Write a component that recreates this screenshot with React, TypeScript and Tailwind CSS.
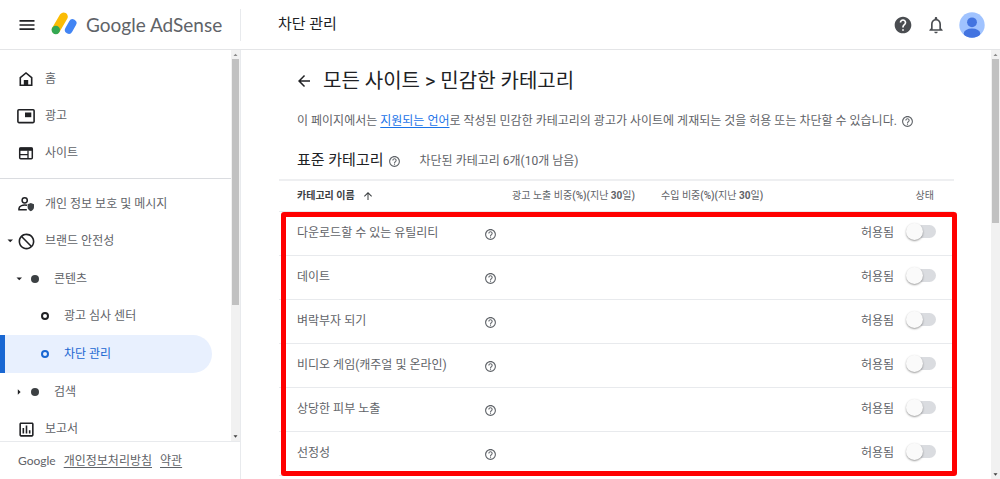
import { useState, type ReactNode } from "react";
import {
  MdArrowBack,
  MdArrowUpward,
  MdBlock,
  MdHelp,
  MdHelpOutline,
  MdMenu,
  MdNotificationsNone,
  MdOutlineAssessment,
} from "react-icons/md";

const LATIN_LOGO = "font-[Lato,sans-serif]";

function AdSenseLogo() {
  return (
    <svg viewBox="0 0 26 24" className="h-6 w-[26px] shrink-0" aria-hidden="true">
      <line x1="12.600" y1="4.700" x2="5" y2="17.700" stroke="#fbbc04" strokeWidth="8.4" strokeLinecap="round" />
      <line x1="21.600" y1="11.200" x2="17.800" y2="17.900" stroke="#4285f4" strokeWidth="7.8" strokeLinecap="round" />
      <circle cx="4.8" cy="18" r="4.2" fill="#34a853" />
    </svg>
  );
}

function HomeIcon() {
  return (
    <svg viewBox="0 0 20 20" className="size-5" aria-hidden="true">
      <path d="M4.3 16.2V8.6L10 4l5.7 4.600v7.600Z" fill="none" stroke="currentColor" strokeWidth="1.6" />
      <path d="M7.800 11h4.400v5.500H7.800z" fill="currentColor" />
    </svg>
  );
}

function AdsIcon() {
  return (
    <svg viewBox="0 0 20 20" className="size-5" aria-hidden="true">
      <rect x="1.900" y="3.800" width="16.200" height="12.800" rx="1" fill="none" stroke="currentColor" strokeWidth="1.600" />
      <path d="M9 6.500h6.300v4.700H9z" fill="currentColor" />
    </svg>
  );
}

function SitesIcon() {
  return (
    <svg viewBox="0 0 20 20" className="size-5" aria-hidden="true">
      <rect x="3.700" y="5" width="12.600" height="10.800" rx="1" fill="none" stroke="currentColor" strokeWidth="1.500" />
      <path d="M3.500 4.500h13v3.300h-13z" fill="currentColor" />
      <path d="M4 11.700h7.700M12 7.500v8.300" fill="none" stroke="currentColor" strokeWidth="1.300" />
    </svg>
  );
}

function PrivacyIcon() {
  return (
    <svg viewBox="0 0 20 20" className="size-5" aria-hidden="true">
      <circle cx="8.700" cy="6.300" r="2.600" fill="none" stroke="currentColor" strokeWidth="1.500" />
      <path
        d="M11 11.300c-4-.9-8 .7-8 3.200v1.300h7.800"
        fill="none"
        stroke="currentColor"
        strokeWidth="1.600"
      />
      <path d="M14.800 9 18 10.300v2.700c0 2-1.300 3.600-3.200 4.200-1.900-.6-3.200-2.200-3.200-4.200v-2.700Z" fill="#3c4043" />
    </svg>
  );
}

function Dot() {
  return <span className="size-2 rounded-full bg-[#3c4043]" />;
}

function Ring() {
  return <span className="size-2 rounded-full border-2 border-current" />;
}

function Caret({ open }: { open: boolean }) {
  return (
    <svg viewBox="0 0 8 8" className="size-2" aria-hidden="true">
      <path d={open ? "M1.500 2.500h5.500L4.250 5.300Z" : "M2.800 1.200v5.600L5.600 4Z"} fill="#202124" />
    </svg>
  );
}

type NavEntry = {
  label: string;
  icon: ReactNode;
  level?: 0 | 1 | 2;
  caret?: "open" | "closed";
  current?: boolean;
};

const PRIMARY: NavEntry[] = [
  { label: "홈", icon: <HomeIcon /> },
  { label: "광고", icon: <AdsIcon /> },
  { label: "사이트", icon: <SitesIcon /> },
];

const SECONDARY: NavEntry[] = [
  { label: "개인 정보 보호 및 메시지", icon: <PrivacyIcon /> },
  { label: "브랜드 안전성", icon: <MdBlock className="size-[19px] -scale-x-100" />, caret: "open" },
  { label: "콘텐츠", icon: <Dot />, level: 1, caret: "open" },
  { label: "광고 심사 센터", icon: <Ring />, level: 2 },
  { label: "차단 관리", icon: <Ring />, level: 2, current: true },
  { label: "검색", icon: <Dot />, level: 1, caret: "closed" },
  { label: "보고서", icon: <MdOutlineAssessment className="size-[19px]" /> },
];

const INDENT = ["pl-[6px]", "pl-[15px]", "pl-[25px]"];

function NavItem({ label, icon, level = 0, caret, current }: NavEntry) {
  return (
    <li className="relative flex">
      {current && <span className="absolute inset-y-0 left-0 w-[5px] bg-[#1967d2]" />}
      <a
        href="#"
        aria-current={current ? "page" : undefined}
        className={`mr-[19px] flex flex-1 items-center text-xs ${INDENT[level]} ${
          current ? "rounded-r-full bg-[#e8f0fe] text-[#1967d2]" : "text-[#5f6368]"
        }`}
      >
        <span className="mr-[2px] w-2">{caret && <Caret open={caret === "open"} />}</span>
        <span
          className={`mr-[9px] flex size-5 items-center justify-center ${current ? "text-[#1967d2]" : "text-[#202124]"}`}
        >
          {icon}
        </span>
        <span>{label}</span>
      </a>
    </li>
  );
}

function ScrollTrack({ thumb }: { thumb: string }) {
  return (
    <div className="flex w-[9px] shrink-0 flex-col items-center bg-[#f1f1f1]" aria-hidden="true">
      <svg viewBox="0 0 9 9" className="size-[9px] shrink-0">
        <path d="M2.500 6h4L4.500 3.700Z" fill="#8a8a8a" />
      </svg>
      <div className="flex w-full flex-1 justify-center">
        <div className={`w-[7px] bg-[#c1c1c1] ${thumb}`} />
      </div>
      <svg viewBox="0 0 9 9" className="size-[9px] shrink-0">
        <path d="M2.500 3.300h4L4.500 5.800Z" fill="#404040" />
      </svg>
    </div>
  );
}

const CATEGORIES = [
  "다운로드할 수 있는 유틸리티",
  "데이트",
  "벼락부자 되기",
  "비디오 게임(캐주얼 및 온라인)",
  "상당한 피부 노출",
  "선정성",
];

function CategoryRow({ name, index }: { name: string; index: number }) {
  const [blocked, setBlocked] = useState(false);
  const id = `category-${index}`;
  return (
    <tr className="h-11 border-b border-[#e8eaed]">
      <td className="pl-[18px]">{name}</td>
      <td>
        <button type="button" aria-label={`${name} 도움말`} className="flex pt-[3px]">
          <MdHelpOutline className="size-[13px]" />
        </button>
      </td>
      <td />
      <td />
      <td className="pr-[18px]">
        <div className="flex items-start justify-end gap-[15px]">
          <label htmlFor={id}>{blocked ? "차단됨" : "허용됨"}</label>
          <input
            id={id}
            type="checkbox"
            role="switch"
            checked={blocked}
            onChange={(e) => setBlocked(e.target.checked)}
            className="relative h-[13px] w-[27px] cursor-pointer appearance-none rounded-full bg-[#dadce0] before:absolute before:-top-[2px] before:-left-[3px] before:size-[17px] before:rounded-full before:bg-[#fafafa] before:shadow-[0_1px_2px_rgba(0,0,0,0.4)] checked:bg-[#8ab4f8] checked:before:left-[13px] checked:before:bg-[#1a73e8]"
          />
        </div>
      </td>
    </tr>
  );
}

function ShareHeading({ metric }: { metric: string }) {
  return (
    <th scope="col" className="font-normal">
      {metric} 비중<b className="font-medium">(%)(</b>지난 <b className="font-bold">30</b>일<b className="font-medium">)</b>
    </th>
  );
}

export default function App() {
  return (
    <div className="flex h-screen flex-col overflow-hidden bg-white font-[Roboto,'Noto_Sans_CJK_KR',sans-serif] text-xs text-[#5f6368]">
      <header className="flex h-[50px] shrink-0 items-center border-b border-[#e4e5e7]">
        <div className="flex h-8 w-[241px] shrink-0 items-center border-r border-[#e8eaed] pl-[17px]">
          <button type="button" aria-label="메뉴" className="text-[#202124]">
            <MdMenu className="size-5" />
          </button>
          <a href="#" className={`ml-[14px] flex items-center gap-[9px] text-[19px] text-[#5f6368] ${LATIN_LOGO}`}>
            <AdSenseLogo />
            <span className="whitespace-nowrap">Google AdSense</span>
          </a>
        </div>
        <span className="flex-1 pl-[37px] text-[15px] text-[#202124]">차단 관리</span>
        <div className="flex items-center gap-[13px] pr-[15px]">
          <button type="button" aria-label="도움말" className="text-[#4a4d51]">
            <MdHelp className="size-5" />
          </button>
          <button type="button" aria-label="알림" className="text-[#4a4d51]">
            <MdNotificationsNone className="size-5" />
          </button>
          <button type="button" aria-label="계정">
            <svg viewBox="0 0 26 26" className="size-[26px]" aria-hidden="true">
              <defs>
                <clipPath id="avatar">
                  <circle cx="13" cy="13" r="12.700" />
                </clipPath>
              </defs>
              <g clipPath="url(#avatar)">
                <path d="M0 0h26v26H0z" fill="#a0c3ff" />
                <circle cx="13" cy="10.300" r="4.900" fill="#4374e0" />
                <ellipse cx="13" cy="21.500" rx="8.300" ry="4.900" fill="#4374e0" />
              </g>
            </svg>
          </button>
        </div>
      </header>

      <div className="flex min-h-0 flex-1">
        <aside className="flex w-[241px] shrink-0 flex-col border-r border-[#e8eaed]">
          <div className="flex min-h-0 flex-1">
            <nav className="min-w-0 flex-1 overflow-hidden pt-[10px]">
              <ul className="grid h-28 auto-rows-fr">
                {PRIMARY.map((item) => (
                  <NavItem key={item.label} {...item} />
                ))}
              </ul>
              <hr className="my-[6px] border-[#dadce0]" />
              <ul className="grid h-[263px] auto-rows-fr">
                {SECONDARY.map((item) => (
                  <NavItem key={item.label} {...item} />
                ))}
              </ul>
            </nav>
            <ScrollTrack thumb="h-[66%]" />
          </div>
          <footer className="flex h-[38px] shrink-0 items-center gap-2 border-t border-[#e8eaed] pl-[18px]">
            <span className={LATIN_LOGO}>Google</span>
            <a href="#" className="underline underline-offset-2">
              개인정보처리방침
            </a>
            <a href="#" className="underline underline-offset-2">
              약관
            </a>
          </footer>
        </aside>

        <main className="min-w-0 flex-1 overflow-hidden pr-[37px] pl-[38px]">
          <div className="flex items-center gap-[10px] pt-4 pl-[16px] text-[#202124]">
            <button type="button" aria-label="뒤로">
              <MdArrowBack className="size-[18px]" />
            </button>
            <h1 className="text-xl leading-[30px]">모든 사이트 &gt; 민감한 카테고리</h1>
          </div>
          <div className="mt-[15px] flex items-center gap-1 pl-[18px] leading-5">
            <p className="whitespace-nowrap">
              이 페이지에서는{" "}
              <a href="#" className="text-[#1a73e8] underline underline-offset-2">
                지원되는 언어
              </a>
              로 작성된 민감한 카테고리의 광고가 사이트에 게재되는 것을 허용 또는 차단할 수 있습니다.
            </p>
            <button type="button" aria-label="언어 도움말">
              <MdHelpOutline className="size-[13px]" />
            </button>
          </div>
          <div className="mt-[17px] flex h-[31px] items-center pb-[5px] pl-[18px]">
            <h2 className="text-[15px] text-[#202124]">표준 카테고리</h2>
            <button type="button" aria-label="표준 카테고리 도움말" className="ml-1">
              <MdHelpOutline className="size-[13px]" />
            </button>
            <span className="ml-[19px]">차단된 카테고리 6개(10개 남음)</span>
          </div>

          <div className="relative">
            <table className="w-full table-fixed border-t-2 border-[#eeeff1] text-left">
              <colgroup>
                <col className="w-[205px]" />
                <col className="w-[28px]" />
                <col className="w-[149px]" />
                <col className="w-[149px]" />
                <col />
              </colgroup>
              <thead>
                <tr className="h-[31px] border-b border-[#e8eaed] text-[10px] whitespace-nowrap">
                  <th scope="col" aria-sort="ascending" className="pl-[18px] font-bold text-[#3c4043]">
                    <button type="button" className="flex items-center gap-[7px]">
                      카테고리 이름
                      <MdArrowUpward className="size-3" />
                    </button>
                  </th>
                  <td />
                  <ShareHeading metric="광고 노출" />
                  <ShareHeading metric="수입" />
                  <th scope="col" className="pr-[20px] text-right font-normal">
                    상태
                  </th>
                </tr>
              </thead>
              <tbody>
                {CATEGORIES.map((name, i) => (
                  <CategoryRow key={name} name={name} index={i} />
                ))}
              </tbody>
            </table>
            <div className="pointer-events-none absolute top-[33px] -right-[3px] bottom-0 left-[2px] rounded-[3px] border-5 border-[#ff0000]" />
          </div>
        </main>
        <ScrollTrack thumb="h-[40%]" />
      </div>
    </div>
  );
}
